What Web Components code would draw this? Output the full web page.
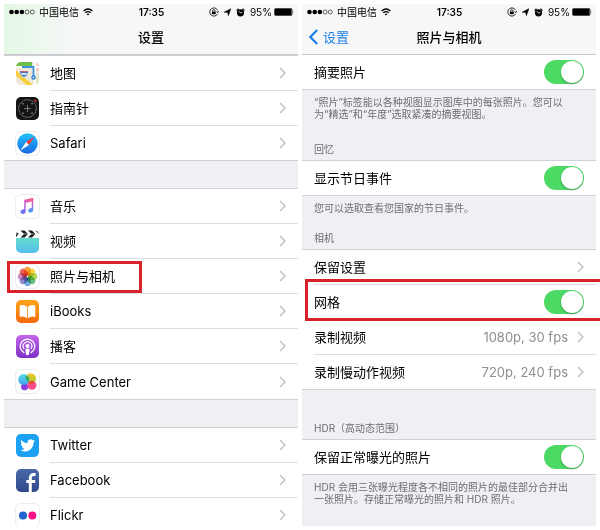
<!DOCTYPE html>
<html lang="zh-CN">
<head>
<meta charset="utf-8">
<title>设置</title>
<style>
  body {
    margin: 0;
    background: #fff;
    color: #000;
    font: 13px/20px Inter, "Noto Sans CJK SC", sans-serif;
  }
  main {
    display: grid;
    grid-template-columns: 1fr 1fr;
    gap: 4px;
    height: 100vh;
    padding: 4px;
    box-sizing: border-box;
    overflow: hidden;
  }
</style>
</head>
<body>

<template id="phone-screen">
  <style>
    :host {
      display: flex;
      flex-direction: column;
      min-width: 0;
      min-height: 0;
      background: #efeff4;
    }
    :host([clipped]) { overflow: hidden; }
  </style>
  <slot></slot>
</template>

<template id="status-bar">
  <style>
    :host {
      display: grid;
      grid-template-columns: 1fr auto 1fr;
      align-items: center;
      height: 16px;
      padding: 0 4px 0 5px;
      font-size: 10px;
      line-height: 16px;
    }
    div { display: flex; align-items: center; gap: 4px; }
    .right { justify-content: flex-end; gap: 5px; }
    .power { gap: 2px; }
    b { font-weight: 600; }
    svg { display: block; }
  </style>
  <div>
    <svg width="26" height="6" viewBox="0 0 26 6">
      <circle cx="2.5" cy="3" r="2.3"/><circle cx="7.7" cy="3" r="2.3"/><circle cx="12.9" cy="3" r="2.3"/>
      <g fill="none" stroke="#000" stroke-width=".6"><circle cx="18.1" cy="3" r="2"/><circle cx="23.3" cy="3" r="2"/></g>
    </svg>
    <slot name="carrier"></slot>
    <svg width="10" height="8" viewBox="0 0 10 8" fill="none" stroke="#000" stroke-width="1.3">
      <path d="M.6 3Q5-1 9.4 3M2.3 4.8Q5 2.4 7.7 4.8"/><path d="M5 7.6 3.6 6.1Q5 5 6.4 6.1z" fill="#000" stroke="none"/>
    </svg>
  </div>
  <b><slot name="time"></slot></b>
  <div class="right">
    <svg width="10" height="10" viewBox="0 0 10 10" fill="none" stroke="#000" stroke-width=".8">
      <path d="M8.6 3.2A4.1 4.1 0 1 0 8.6 6.8M9.7 4 8.7 5.700 7.5 4.3"/>
      <path d="M3.7 4.8V3.7a1.1 1.1 0 0 1 2.2 0v1.1"/><path d="M2.9 4.6h3.8v2.6H2.9z" fill="#000" stroke="none"/>
    </svg>
    <svg width="7" height="8" viewBox="0 0 7 8"><path d="M7 .6 4.4 7.8 3.600 4.500 0 4.200z" stroke="#000" stroke-width=".4"/></svg>
    <svg width="9" height="9" viewBox="0 0 9 9">
      <circle cx="4.5" cy="4.8" r="3.600"/><path d="M.6 2.6 2.5.8M8.4 2.6 6.5.8" stroke="#000" stroke-width="1.2"/>
      <path d="M3 3.2 4.5 5 6.3 4.3" fill="none" stroke="#fff" stroke-width=".8"/>
    </svg>
    <div class="power">
      <slot name="battery"></slot>
      <svg width="20" height="8" viewBox="0 0 20 8">
        <rect x=".5" y=".5" width="17.500" height="7" rx="1" fill="none" stroke="#000" stroke-width=".7"/>
        <rect x="1" y="1" width="16.500" height="6"/><path d="M18.800 2.7q1.2 1.3 0 2.6z"/>
      </svg>
    </div>
  </div>
</template>

<template id="nav-header">
  <style>
    :host {
      display: block;
      background: #f7f7f8;
      border-bottom: 1px solid #c8c8cc;
    }
    :host([tinted]) { background: linear-gradient(90deg, #e3f7e4, #eef8ef 40px, #f7f7f8 72px); }
    nav {
      display: grid;
      grid-template-columns: 1fr auto 1fr;
      align-items: center;
      height: 34px;
      padding: 0 7px;
    }
    h1 { margin: 0; font-size: 13px; font-weight: 500; grid-column: 2; }
    a { display: flex; align-items: center; gap: 5px; color: #1a80e5; text-decoration: none; grid-row: 1; }
    a[hidden] { display: none; }
  </style>
  <slot name="status"></slot>
  <nav>
    <a href="#settings" hidden>
      <svg width="9" height="16" viewBox="0 0 9 16" fill="none" stroke="currentColor" stroke-width="2.200"><path d="M8.2 1 1.4 8l6.8 7"/></svg>
      <span></span>
    </a>
    <h1><slot></slot></h1>
  </nav>
</template>

<template id="settings-group">
  <style>
    :host { display: block; }
    h2, .note {
      margin: 0;
      padding: 0 12px;
      font-size: 10px;
      line-height: 12px;
      font-weight: 400;
      color: #6d6d72;
    }
    h2 { padding-top: var(--lead, 23px); padding-bottom: 5px; }
    .note { padding-top: 6px; }
    .rows { border-top: 1px solid #d0d0d5; border-bottom: 1px solid #d0d0d5; background: #fff; }
    :host([first]) .rows { border-top: 0; }
    :host([apart]) { margin-top: 27px; }
    [hidden] { display: none; }
  </style>
  <h2><slot name="heading"></slot></h2>
  <div class="rows"><slot></slot></div>
  <div class="note"><slot name="note"></slot></div>
</template>

<template id="settings-row">
  <style>
    :host { display: block; position: relative; height: 35px; }
    :host([last]) { height: 34px; }
    .row {
      display: flex;
      align-items: center;
      gap: 11px;
      height: 100%;
      padding-left: 12px;
      color: inherit;
      text-decoration: none;
    }
    .body {
      flex: 1;
      display: flex;
      align-items: center;
      justify-content: space-between;
      height: 100%;
      padding-right: 12px;
      box-sizing: border-box;
      border-bottom: 1px solid #dddde0;
    }
    :host([last]) .body, :host([unruled]) .body { border-bottom: 0; }
    .end { display: flex; align-items: center; gap: 9px; color: #8e8e93; }
    input {
      appearance: none;
      display: flex;
      justify-content: flex-end;
      width: 40px;
      height: 24px;
      margin: 0;
      padding: 1px;
      box-sizing: border-box;
      border-radius: 12px;
      background: #4cd964;
    }
    input:not(:checked) { justify-content: flex-start; background: #e5e5ea; }
    input::before {
      content: "";
      width: 22px;
      height: 22px;
      border-radius: 50%;
      background: #fff;
      box-shadow: 0 1px 2px rgba(0, 0, 0, .3);
    }
    /* the marker frame lies over the rows around it */
    .mark { position: absolute; z-index: 1; border: 3px solid #d8232a; pointer-events: none; box-sizing: border-box; }
    .mark.label { inset: 2px auto 1px 3px; width: 135px; }
    .mark.full { inset: -6px -4px -1px 3px; border-right: 0; }
  </style>
</template>

<template id="app-icon">
  <style>
    :host {
      display: block;
      width: 23px;
      height: 23px;
      border-radius: 5px;
      overflow: hidden;
      background: #fff;
    }
    :host([plain]) { box-shadow: 0 0 0 1px #ececee; }
    svg { display: block; width: 100%; height: 100%; }
  </style>
</template>

<main>
  <phone-screen clipped>
    <nav-header tinted>
      <status-bar slot="status"><span slot="carrier">中国电信</span><span slot="time">17:35</span><span slot="battery">95%</span></status-bar>
      设置
    </nav-header>
    <settings-group>
      <settings-row><app-icon slot="icon" name="maps"></app-icon>地图</settings-row>
      <settings-row><app-icon slot="icon" name="compass"></app-icon>指南针</settings-row>
      <settings-row last><app-icon slot="icon" name="safari" plain></app-icon>Safari</settings-row>
    </settings-group>
    <settings-group apart>
      <settings-row><app-icon slot="icon" name="music" plain></app-icon>音乐</settings-row>
      <settings-row><app-icon slot="icon" name="videos"></app-icon>视频</settings-row>
      <settings-row mark="label"><app-icon slot="icon" name="photos" plain></app-icon>照片与相机</settings-row>
      <settings-row><app-icon slot="icon" name="ibooks"></app-icon>iBooks</settings-row>
      <settings-row><app-icon slot="icon" name="podcasts"></app-icon>播客</settings-row>
      <settings-row unruled><app-icon slot="icon" name="games" plain></app-icon>Game Center</settings-row>
    </settings-group>
    <settings-group apart>
      <settings-row><app-icon slot="icon" name="twitter"></app-icon>Twitter</settings-row>
      <settings-row><app-icon slot="icon" name="facebook"></app-icon>Facebook</settings-row>
      <settings-row last><app-icon slot="icon" name="flickr" plain></app-icon>Flickr</settings-row>
    </settings-group>
  </phone-screen>

  <phone-screen>
    <nav-header back="设置">
      <status-bar slot="status"><span slot="carrier">中国电信</span><span slot="time">17:35</span><span slot="battery">95%</span></status-bar>
      照片与相机
    </nav-header>
    <settings-group first>
      <settings-row type="switch" last>摘要照片</settings-row>
      <span slot="note">“照片”标签能以各种视图显示图库中的每张照片。您可以<br>为“精选”和“年度”选取紧凑的摘要视图。</span>
    </settings-group>
    <settings-group>
      <span slot="heading">回忆</span>
      <settings-row type="switch" last>显示节日事件</settings-row>
      <span slot="note">您可以选取查看您国家的节日事件。</span>
    </settings-group>
    <settings-group style="--lead: 18px">
      <span slot="heading">相机</span>
      <settings-row>保留设置</settings-row>
      <settings-row type="switch" mark="full">网格</settings-row>
      <settings-row value="1080p, 30 fps">录制视频</settings-row>
      <settings-row value="720p, 240 fps" last>录制慢动作视频</settings-row>
    </settings-group>
    <settings-group style="--lead: 32px">
      <span slot="heading">HDR（高动态范围）</span>
      <settings-row type="switch" last>保留正常曝光的照片</settings-row>
      <span slot="note">HDR 会用三张曝光程度各不相同的照片的最佳部分合并出<br>一张照片。存储正常曝光的照片和 HDR 照片。</span>
    </settings-group>
  </phone-screen>
</main>

<script>
  (function() {
    const petals = ['#f7941d', '#f5d327', '#a5cf3d', '#4fb86a', '#5a9fd6', '#7f76c4', '#c678b5', '#ee4b42']
      .map((color, i) => `<rect x="8.3" y="1.8" width="6.4" height="9" rx="3.2" fill="${color}" opacity=".85" transform="rotate(${i * 45} 11.5 11.5)"/>`)
      .join('');

    const icons = {
      maps: `
        <path fill="#eee8d9" d="M0 0h23v23H0z"/><path fill="#6fbe4a" d="M0 0h16v4H0z"/>
        <path fill="#f5c9c9" d="M20 0h3v9h-3z"/><path fill="#d9eac0" d="M20 14h3v9h-3z"/>
        <path d="M0 5h23M19 0v23" stroke="#fff" stroke-width="2"/>
        <path d="M-1 10 15 24" stroke="#f8cf36" stroke-width="4"/>
        <path d="M6 5h11.5v10" fill="none" stroke="#3d8fe0" stroke-width="1.8"/>
        <circle cx="17.5" cy="15.5" r="2.2" fill="#2f7fd6"/><circle cx="17.5" cy="15.5" r=".8" fill="#fff"/>
        <path fill="#3a78c9" stroke="#fff" stroke-width=".6" d="M4.2 8.5q3.8 1 7.6 0 1.6 5-3.8 7-5.4-2-3.8-7z"/>
        <path fill="#d9505a" d="M4.5 9q3.5.8 7 0l.2 1.3H4.3z"/><path d="M5.2 12h5.6" stroke="#fff" stroke-width="1.4"/>`,
      compass: `
        <path fill="#141416" d="M0 0h23v23H0z"/>
        <circle cx="11.5" cy="11.5" r="8.8" fill="none" stroke="#aaa" stroke-width="1" stroke-dasharray="1 .7"/>
        <path d="M11.5 8v7M8 11.5h7" stroke="#999" stroke-width=".7"/>
        <path d="M6.3 6.8h1.3M15.4 6.8h1.3M6.3 16.2h1.3M15.4 16.2h1.3" stroke="#ddd"/>
        <path fill="#ff3b30" d="m17.6 2.7 2.6.2.1 2.5z"/>`,
      safari: `
        <defs><linearGradient id="g" x2="0" y2="1"><stop stop-color="#20c3fb"/><stop offset="1" stop-color="#1c68e3"/></linearGradient></defs>
        <circle cx="11.5" cy="11.5" r="10.2" fill="url(#g)"/>
        <path fill="#f5383b" d="m18.6 4.400-8.500 5.700 2.800 2.800z"/><path fill="#fff" d="m4.400 18.600 5.700-8.500 2.800 2.800z"/>`,
      music: `
        <defs><linearGradient id="g" x1="1" x2="0" y2="1"><stop stop-color="#ff5a6e"/><stop offset=".4" stop-color="#e45abf"/><stop offset=".75" stop-color="#8a63f0"/><stop offset="1" stop-color="#4c8df5"/></linearGradient>
        <linearGradient id="b" x2="0" y2="1"><stop stop-color="#fa5c78"/><stop offset=".5" stop-color="#a86ae4"/><stop offset="1" stop-color="#35a8f5"/></linearGradient></defs>
        <path fill="url(#g)" d="m8.2 4.8 9-2v3.4l-7.5 1.6V16c0 1.9-1 3-2.7 3-3.3 0-3.4-3.8-.2-4.4l1.4-.4z"/>
        <path fill="url(#b)" d="M15.7 4h1.5v10.5c0 1.9-1 3-2.6 3-3.2 0-3.2-3.7-.1-4.3l1.2-.3z"/>`,
      videos: `
        <defs><linearGradient id="g" x2="0" y2="1"><stop stop-color="#62ddca"/><stop offset="1" stop-color="#56bdf0"/></linearGradient></defs>
        <path fill="url(#g)" d="M0 8h23v15H0z"/>
        <path fill="#fff" d="M0 0h23v7.5H0z"/>
        <path fill="#1c1c1e" d="M0 1.2 2.8 4 0 7zM4.5.5h4L12 4 8.5 7.5h-4L8 4zM12 .5h4L19.5 4 16 7.5h-4L15.5 4zM19.5.5H23V4z"/>
        <path d="M0 4h23" stroke="#fff" stroke-width=".5"/>`,
      photos: `<style>rect { mix-blend-mode: multiply; }</style>${petals}`,
      ibooks: `
        <defs><linearGradient id="g" x2="0" y2="1"><stop stop-color="#ffa31a"/><stop offset="1" stop-color="#f46a0c"/></linearGradient></defs>
        <path fill="url(#g)" d="M0 0h23v23H0z"/>
        <path fill="#fff" d="M11.1 6.8Q7.6 3.9 3.7 5.7V17q4-1.5 7.4 1.2zM11.9 6.8q3.5-2.9 7.4-1.1V17q-4-1.5-7.4 1.2z"/>`,
      podcasts: `
        <defs><linearGradient id="g" x2="0" y2="1"><stop stop-color="#c467e8"/><stop offset="1" stop-color="#7e32c9"/></linearGradient></defs>
        <path fill="url(#g)" d="M0 0h23v23H0z"/>
        <g fill="none" stroke="#fff" stroke-width="1.2"><path d="M8.3 17.9a7.3 7.3 0 1 1 6.4 0"/><path d="M8.2 14a4.3 4.3 0 1 1 6.6 0"/></g>
        <circle cx="11.5" cy="10.9" r="2" fill="#fff"/><path fill="#fff" d="M9.3 15q0-1.4 2.2-1.4t2.2 1.4l-.7 4.2q-.2 1-1.5 1t-1.5-1z"/>`,
      games: `
        <defs><linearGradient id="y" x2="0" y2="1"><stop stop-color="#fcc32b"/><stop offset="1" stop-color="#8fd129"/></linearGradient>
        <linearGradient id="c" x2="0" y2="1"><stop stop-color="#46d4e6"/><stop offset="1" stop-color="#2f9bea"/></linearGradient></defs>
        <circle cx="8.6" cy="16.8" r="3.5" fill="#8a3be0"/>
        <circle cx="14.8" cy="8.4" r="5.2" fill="url(#y)"/>
        <circle cx="7.8" cy="9.5" r="5.5" fill="url(#c)" opacity=".9"/>
        <path d="M10 5.5a5.2 5.2 0 0 1 3 5.8 5.2 5.2 0 0 1-3.3-4z" fill="#3aa53f"/>
        <circle cx="15.9" cy="15.2" r="4.5" fill="#fb3f83" opacity=".93"/>
        <path d="M12 13.3a4.5 4.5 0 0 1 6.9-1q-2.6 2.4-6.9 1z" fill="#f04a25"/>`,
      twitter: `
        <path fill="#1da1f2" d="M0 0h23v23H0z"/>
        <path fill="#fff" transform="translate(4.2 4) scale(.62)" d="M23.953 4.57a10 10 0 01-2.825.775 4.958 4.958 0 002.163-2.723c-.951.555-2.005.959-3.127 1.184a4.92 4.92 0 00-8.384 4.482C7.69 8.095 4.067 6.13 1.64 3.162a4.822 4.822 0 00-.666 2.475c0 1.71.87 3.213 2.188 4.096a4.904 4.904 0 01-2.228-.616v.06a4.923 4.923 0 003.946 4.827 4.996 4.996 0 01-2.212.085 4.936 4.936 0 004.604 3.417 9.867 9.867 0 01-6.102 2.105c-.39 0-.779-.023-1.17-.067a13.995 13.995 0 007.557 2.209c9.053 0 13.998-7.496 13.998-13.985 0-.21 0-.42-.015-.63A9.935 9.935 0 0024 4.59z"/>`,
      facebook: `
        <defs><linearGradient id="g" x2="0" y2="1"><stop stop-color="#4a68a8"/><stop offset="1" stop-color="#2f4a8c"/></linearGradient></defs>
        <path fill="url(#g)" d="M0 0h23v23H0z"/>
        <path d="M14.3 23V9q0-3.4 3.4-3.4h1.8M10.3 12.5h8.9" fill="none" stroke="#fff" stroke-width="3"/>`,
      flickr: `<circle cx="7" cy="11.5" r="4" fill="#1f63d0"/><circle cx="16.3" cy="11.5" r="4" fill="#ff0f84"/>`
    };

    class BaseElement extends HTMLElement {
      constructor() {
        super();
        let template = document.querySelector(`template#${this.localName}`);
        this.attachShadow({mode: 'open'}).append(template.content.cloneNode(true));
      }
      $(selector) {
        return this.shadowRoot.querySelector(selector);
      }
    }

    class NavHeader extends BaseElement {
      connectedCallback() {
        if (!this.hasAttribute('back')) return;
        this.$('a').hidden = false;
        this.$('a span').textContent = this.getAttribute('back');
      }
    }

    class SettingsGroup extends BaseElement {
      connectedCallback() {
        this.$('h2').hidden = !this.querySelector('[slot=heading]');
        this.$('.note').hidden = !this.querySelector('[slot=note]');
      }
    }

    class SettingsRow extends BaseElement {
      connectedCallback() {
        let isSwitch = this.getAttribute('type') === 'switch';
        let row = document.createElement(isSwitch ? 'label' : 'a');
        if (!isSwitch) row.href = '#detail';
        row.className = 'row';
        let value = this.hasAttribute('value') ? `<span>${this.getAttribute('value')}</span>` : '';
        let end = isSwitch
          ? '<input type="checkbox" role="switch" checked>'
          : `${value}<svg width="7" height="12" viewBox="0 0 7 12" fill="none" stroke="#c2c2c7" stroke-width="1.5"><path d="m1 1 5 5-5 5"/></svg>`;
        row.innerHTML = `<slot name="icon"></slot><div class="body"><span><slot></slot></span><span class="end">${end}</span></div>`;
        this.shadowRoot.append(row);
        if (this.hasAttribute('mark')) {
          let mark = document.createElement('div');
          mark.classList.add('mark', this.getAttribute('mark'));
          this.shadowRoot.append(mark);
        }
      }
    }

    class AppIcon extends BaseElement {
      connectedCallback() {
        let holder = document.createElement('div');
        holder.innerHTML = `<svg viewBox="0 0 23 23" aria-hidden="true">${icons[this.getAttribute('name')]}</svg>`;
        this.shadowRoot.append(holder);
      }
    }

    customElements.define('phone-screen', class extends BaseElement {});
    customElements.define('status-bar', class extends BaseElement {});
    customElements.define('nav-header', NavHeader);
    customElements.define('settings-group', SettingsGroup);
    customElements.define('settings-row', SettingsRow);
    customElements.define('app-icon', AppIcon);
  })();
</script>
</body>
</html>
